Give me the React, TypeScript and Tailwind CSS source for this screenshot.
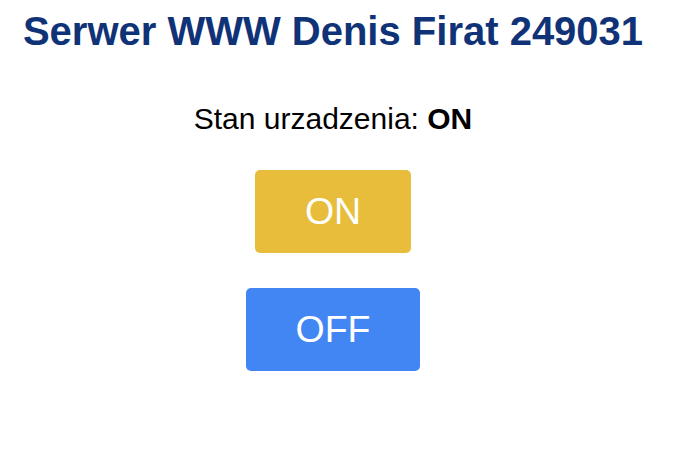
export default function App() {
  return (
    <div className="w-[666px] bg-white font-['Liberation_Sans',Arial,sans-serif] flex flex-col items-center text-center">
      <h1 className="mt-[8px] text-[40px] leading-[46px] font-bold text-[#0F3376]">
        Serwer WWW Denis Firat 249031
      </h1>
      <p className="mt-[47px] text-[30px] leading-[35px] text-black">
        Stan urzadzenia: <strong className="font-bold">ON</strong>
      </p>
      <button className="mt-[34px] px-[50px] py-[20px] rounded-[5px] bg-[#e7bd3b] text-white text-[37.5px] leading-[43px]">
        ON
      </button>
      <button className="mt-[35px] px-[50px] py-[20px] rounded-[5px] bg-[#4286f4] text-white text-[37.5px] leading-[43px]">
        OFF
      </button>
    </div>
  );
}
